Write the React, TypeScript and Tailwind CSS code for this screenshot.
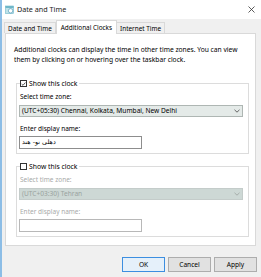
import React from "react";

const font = { fontFamily: '"Noto Sans", "DejaVu Sans", sans-serif' };

function CheckBox({ checked }: { checked?: boolean }) {
  return (
    <span className="flex h-[7px] w-[7px] items-center justify-center border border-[#333] bg-white">
      {checked && (
        <svg width="6" height="6" viewBox="0 0 6 6">
          <path d="M0.8 3.1 L2.4 4.6 L5.3 1.2" fill="none" stroke="#222" strokeWidth="0.9" />
        </svg>
      )}
    </span>
  );
}

function Chevron({ color }: { color: string }) {
  return (
    <svg width="6" height="4" viewBox="0 0 6 4">
      <path d="M0.5 0.8 L3 3.2 L5.5 0.8" fill="none" stroke={color} strokeWidth="0.9" />
    </svg>
  );
}

function ClockGroup({
  checked,
  zone,
  name,
  disabled,
}: {
  checked?: boolean;
  zone: string;
  name: string;
  disabled?: boolean;
}) {
  const labelColor = disabled ? "text-[#a8aaa9]" : "text-black";
  return (
    <fieldset className="ml-[10px] w-[233px] border border-[#dcdcdc] pl-[2px] pr-[5px] pb-[4px]">
      <legend className="ml-[1px] flex h-[9px] items-center gap-[1px] pr-[2px] text-[6.8px] leading-[9px] text-black">
        <CheckBox checked={checked} />
        <span className="pl-[1px]">Show this clock</span>
      </legend>
      <div className={`mt-[4px] pl-[1px] text-[6.5px] leading-[9px] ${labelColor}`}>Select time zone:</div>
      <div
        className={`mt-[4px] flex h-[12px] items-center justify-between border px-[2px] text-[6.6px] ${
          disabled
            ? "border-[#c4ccca] bg-[#cdd8d5] text-[#9aa3a0]"
            : "border-[#aeb6b3] bg-[#e4eae8] text-black"
        }`}
      >
        <span>{zone}</span>
        <Chevron color={disabled ? "#a0a8a5" : "#555"} />
      </div>
      <div className={`mt-[7px] pl-[1px] text-[6.5px] leading-[9px] ${labelColor}`}>Enter display name:</div>
      <div
        className={`mt-[3px] flex h-[13px] w-[123px] items-center border px-[2px] ${
          disabled ? "border-[#b8b8b8]" : "border-[#8d8d8d]"
        } bg-white`}
      >
        <span
          className="text-[6.4px] text-black"
          style={{ fontFamily: '"DejaVu Sans", sans-serif' }}
          dir="rtl"
        >
          {name}
        </span>
      </div>
    </fieldset>
  );
}

function Button({ label, primary }: { label: string; primary?: boolean }) {
  return (
    <div
      className={`flex h-[15px] w-[43px] items-center justify-center border text-[6.6px] text-black ${
        primary ? "border-[#3c8ee0] bg-[#e5f0fa]" : "border-[#adadad] bg-[#e1e1e1]"
      }`}
    >
      {label}
    </div>
  );
}

export default function App() {
  return (
    <div className="h-[277px] w-[261px] overflow-hidden border-l-2 border-[#8cbde6] bg-[#f0f0f0]" style={font}>
      <div className="flex h-[19px] items-center bg-white pl-[3px] pr-[6px]">
        <svg width="9" height="9" viewBox="0 0 9 9">
          <rect x="0.5" y="1" width="8" height="7.5" fill="#bfe3ea" stroke="#6fb7c9" strokeWidth="0.6" />
          <rect x="0.5" y="1" width="8" height="2" fill="#6fb7c9" />
          <circle cx="5.6" cy="5.8" r="2.2" fill="#fff" stroke="#3f8fb0" strokeWidth="0.6" />
        </svg>
        <span className="ml-[3px] text-[7.2px] text-[#222]">Date and Time</span>
        <svg className="ml-auto" width="7" height="7" viewBox="0 0 7 7">
          <path d="M0.5 0.5 L6.5 6.5 M6.5 0.5 L0.5 6.5" stroke="#333" strokeWidth="0.8" />
        </svg>
      </div>

      <div className="flex h-[14px] items-end pl-[2px] text-[6.4px] text-black">
        <div className="flex h-[11px] items-center border border-b-0 border-[#d9d9d9] bg-[#f0f0f0] px-[3px] pt-[1px]">
          Date and Time
        </div>
        <div className="relative top-[1px] flex h-[14px] items-center border border-b-0 border-[#d9d9d9] bg-white px-[4px]">
          Additional Clocks
        </div>
        <div className="flex h-[11px] items-center border border-b-0 border-l-0 border-[#d9d9d9] bg-[#f0f0f0] px-[3px] pt-[1px]">
          Internet Time
        </div>
      </div>

      <div className="ml-[3px] h-[213px] w-[251px] border border-[#d9d9d9] bg-white">
        <p className="whitespace-nowrap pl-[8px] pt-[11px] text-[6.7px] leading-[10px] text-black">
          Additional clocks can display the time in other time zones. You can view
          <br />
          them by clicking on or hovering over the taskbar clock.
        </p>
        <div className="mt-[14px]">
          <ClockGroup checked zone="(UTC+05:30) Chennai, Kolkata, Mumbai, New Delhi" name="دهلی نو- هند" />
        </div>
        <div className="mt-[8px]">
          <ClockGroup disabled zone="(UTC+03:30) Tehran" name="" />
        </div>
      </div>

      <div className="mt-[11px] flex justify-end gap-[3px] pr-[4px]">
        <Button label="OK" primary />
        <Button label="Cancel" />
        <Button label="Apply" />
      </div>
    </div>
  );
}
